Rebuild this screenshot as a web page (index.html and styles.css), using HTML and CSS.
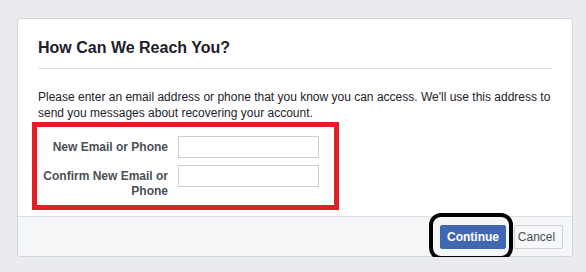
FILE: index.html
```html
<!DOCTYPE html>
<html lang="en">
<head>
<meta charset="utf-8">
<title>How Can We Reach You?</title>
<link rel="stylesheet" href="styles.css">
</head>
<body>
<div class="card">
  <div class="card-body">
    <div class="header">
      <h2 class="title">How Can We Reach You?</h2>
    </div>
    <p class="intro">Please enter an email address or phone that you know you can access. We'll use this address to send you messages about recovering your account.</p>
    <div class="highlight">
      <label class="label" for="email1">New Email or Phone</label>
      <input class="field" id="email1" type="text">
      <label class="label" for="email2">Confirm New Email or Phone</label>
      <input class="field" id="email2" type="text">
    </div>
  </div>
  <div class="footer">
    <span class="mark"><button class="btn btn-primary" type="button">Continue</button></span>
    <button class="btn btn-cancel" type="button">Cancel</button>
  </div>
</div>
</body>
</html>
```

FILE: styles.css
```css
html, body {
  margin: 0;
  padding: 0;
  background: #e9ebee;
  font-family: "Liberation Sans", Arial, Helvetica, sans-serif;
}

.card {
  margin: 18px 13px 0 17px;
  width: 556px;
  box-sizing: border-box;
  background: #fff;
  border: 1px solid #d3d6db;
  border-radius: 3px;
  overflow: visible;
}

.card-body {
  padding: 0 20px 6px;
}

.header {
  padding: 19px 0 10px;
  border-bottom: 1px solid #dadde1;
}

.title {
  margin: 0;
  font-size: 16px;
  line-height: 20px;
  font-weight: bold;
  color: #1d2129;
}

.intro {
  margin: 20px 0 1px;
  font-size: 12px;
  line-height: 16px;
  color: #1d2129;
}

.highlight {
  margin-left: -6px;
  width: 307px;
  box-sizing: border-box;
  border: 5px solid #e41e26;
  padding: 9px 0 6px;
  display: grid;
  grid-template-columns: 131px 141px;
  column-gap: 10px;
  row-gap: 7px;
  align-items: start;
}

.label {
  padding-top: 4px;
  font-size: 12px;
  line-height: 15px;
  font-weight: bold;
  color: #4b4f56;
  text-align: right;
}

.field {
  margin: 0;
  width: 141px;
  height: 22px;
  box-sizing: border-box;
  border: 1px solid #ccd0d5;
  background: #fff;
  padding: 0 4px;
  font-family: inherit;
  font-size: 12px;
}

.footer {
  display: flex;
  justify-content: flex-end;
  align-items: center;
  gap: 8px;
  padding: 8px 9px 7px;
  background: #f5f6f7;
  border-top: 1px solid #dddfe2;
  border-radius: 0 0 3px 3px;
}

.mark {
  position: relative;
  display: flex;
}

.mark::after {
  content: "";
  position: absolute;
  left: -11px;
  right: -7px;
  top: -12px;
  bottom: -11px;
  border: 4px solid #000;
  border-radius: 12px;
  pointer-events: none;
  z-index: 1;
}

.btn {
  margin: 0;
  height: 24px;
  box-sizing: border-box;
  font-family: inherit;
  font-size: 12px;
  line-height: 22px;
  border-radius: 2px;
  cursor: pointer;
}

.btn-primary {
  width: 66px;
  padding: 0 6px;
  background: #4267b2;
  border: 1px solid #4267b2;
  color: #fff;
  font-weight: bold;
}

.btn-cancel {
  width: 49px;
  padding: 0 6px 0 2px;
  background: #f6f7f9;
  border: 1px solid #ced0d4;
  color: #4b4f56;
  font-weight: normal;
}
```
